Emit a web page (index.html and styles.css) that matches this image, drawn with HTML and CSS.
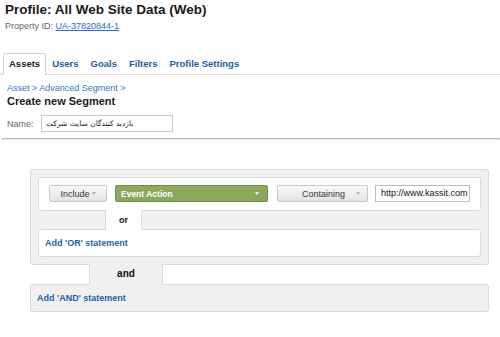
FILE: index.html
```html
<!DOCTYPE html>
<html>
<head>
<meta charset="utf-8">
<link rel="stylesheet" href="styles.css">
</head>
<body>

<div class="header">
  <h1 class="title">Profile: All Web Site Data (Web)</h1>
  <div class="propId">Property ID: <a href="#">UA-37820844-1</a></div>
</div>

<div class="tabs">
  <div class="tab active">Assets</div>
  <div class="tab">Users</div>
  <div class="tab">Goals</div>
  <div class="tab">Filters</div>
  <div class="tab">Profile Settings</div>
</div>

<div class="content">
  <div class="crumbs">Asset &gt; Advanced Segment &gt;</div>
  <h2 class="subTitle">Create new Segment</h2>
  <div class="nameRow">
    <span class="nameLabel">Name:</span>
    <div class="nameInput">بازدید کنندگان سایت شرکت</div>
  </div>
</div>

<div class="separator"></div>

<!-- segment builder -->
<div class="andBlock">
  <div class="orBox">
    <div class="btn btnInclude">Include<span class="arrow"></span></div>
    <div class="btnGreen">Event Action<span class="arrow white"></span></div>
    <div class="btn btnMatch">Containing<span class="arrow"></span></div>
    <div class="valueInput">http://www.kassit.com</div>
  </div>
  <div class="link orLink">or</div>
  <div class="orBox addRow">
    <span class="addLink">Add 'OR' statement</span>
  </div>
</div>
<div class="link andLink">and</div>
<div class="addAnd">
  <span class="addLink">Add 'AND' statement</span>
</div>

</body>
</html>
```

FILE: styles.css
```css
/* 頁面基本設定 */
body {
  margin: 0;
  font-family: "Liberation Sans", Arial, sans-serif;
  color: #222;
  background-color: #fff;
}

.header {
  padding: 1px 5px 0;
}

.title {
  margin: 0;
  font-size: 13.5px;
  line-height: 18px;
  font-weight: bold;
  color: #1a1a1a;
}

.propId {
  margin-top: 1px;
  font-size: 9px;
  line-height: 12px;
  color: #666;
}

.propId a {
  color: #2a6bbf;
}

/* 分頁標籤 */
.tabs {
  display: flex;
  margin-top: 21px;
  padding-left: 3px;
  border-bottom: 1px solid #dcdcdc;
}

.tab {
  padding: 0 5px;
  height: 20px;
  line-height: 20px;
  margin-bottom: -1px;
  border: 1px solid transparent;
  border-bottom: none;
  font-size: 9.5px;
  font-weight: bold;
  color: #1d5f9f;
}

.tab.active {
  height: 21px;
  border-color: #d0d0d0;
  border-radius: 2px 2px 0 0;
  background-color: #fff;
  color: #222;
}

.content {
  padding: 0 7px;
}

.crumbs {
  margin-top: 7px;
  font-size: 9px;
  line-height: 12px;
  color: #3575c3;
}

.subTitle {
  margin: 0;
  font-size: 11px;
  line-height: 14px;
  font-weight: bold;
  color: #1a1a1a;
}

.nameRow {
  display: flex;
  align-items: center;
  margin-top: 7px;
}

.nameLabel {
  width: 34px;
  font-size: 9px;
  color: #666;
}

.nameInput {
  width: 126px;
  height: 15px;
  padding-left: 4px;
  border: 1px solid #c8c8c8;
  font-family: "DejaVu Sans", sans-serif;
  font-size: 7.5px;
  line-height: 15px;
  color: #222;
}

.separator {
  margin: 6px 0 0 2px;
  border-top: 1px solid #b8b8b8;
  border-bottom: 1px dotted #cfcfcf;
}

/* 區段建立區 */
.andBlock {
  margin: 29px 0 0 30px;
  width: 443px;
  padding: 7px 7px 7px;
  border: 1px solid #dadada;
  border-radius: 3px;
  background-color: #f0f0f0;
}

.orBox {
  display: flex;
  align-items: center;
  padding: 7px 0 8px 10px;
  border: 1px solid #dadada;
  border-radius: 3px;
  background-color: #fff;
}

.btn {
  display: flex;
  align-items: center;
  height: 15px;
  border: 1px solid #c9c9c9;
  border-radius: 2px;
  background: linear-gradient(#f9f9f9, #e4e4e4);
  font-size: 9px;
  color: #333;
}

.btnInclude {
  width: 56px;
  justify-content: center;
}

.btnInclude .arrow {
  margin-left: 2px;
}

.btnGreen {
  display: flex;
  align-items: center;
  width: 146px;
  height: 15px;
  margin-left: 8px;
  padding-left: 5px;
  border: 1px solid #6f8d48;
  border-radius: 2px;
  background-color: #8aa95d;
  font-size: 8.5px;
  font-weight: bold;
  color: #fff;
}

.btnGreen .arrow {
  margin-left: auto;
  margin-right: 8px;
}

.btnMatch {
  width: 65px;
  margin-left: 9px;
  padding-left: 24px;
}

.btnMatch .arrow {
  margin-left: 11px;
}

.arrow {
  width: 0;
  height: 0;
  border-left: 2.5px solid transparent;
  border-right: 2.5px solid transparent;
  border-top: 3px solid #b0b0b0;
}

.arrow.white {
  border-top-color: #fff;
}

.valueInput {
  width: 88px;
  height: 15px;
  margin-left: 7px;
  padding-left: 5px;
  border: 1px solid #bdbdbd;
  background-color: #fff;
  font-size: 9px;
  line-height: 15px;
  color: #111;
  white-space: nowrap;
  overflow: hidden;
}

/* or / and 連接標籤 */
.link {
  position: relative;
  z-index: 1;
  height: 20px;
  margin-top: -1px;
  margin-bottom: -1px;
  border-left: 1px solid #dadada;
  border-right: 1px solid #dadada;
  font-weight: bold;
  line-height: 20px;
  text-align: center;
  color: #111;
}

.orLink {
  width: 35px;
  margin-left: 67px;
  background-color: #fff;
  font-size: 9px;
}

.andLink {
  width: 72px;
  height: 21px;
  margin-left: 89px;
  background-color: #f0f0f0;
  font-size: 10px;
}

.addRow {
  padding: 0 6px;
  height: 26px;
}

.addLink {
  font-size: 9px;
  font-weight: bold;
  color: #1f5fa3;
}

.addAnd {
  display: flex;
  align-items: center;
  width: 451px;
  height: 26px;
  margin-left: 30px;
  padding-left: 6px;
  border: 1px solid #dadada;
  border-radius: 3px;
  background-color: #f0f0f0;
}
```
